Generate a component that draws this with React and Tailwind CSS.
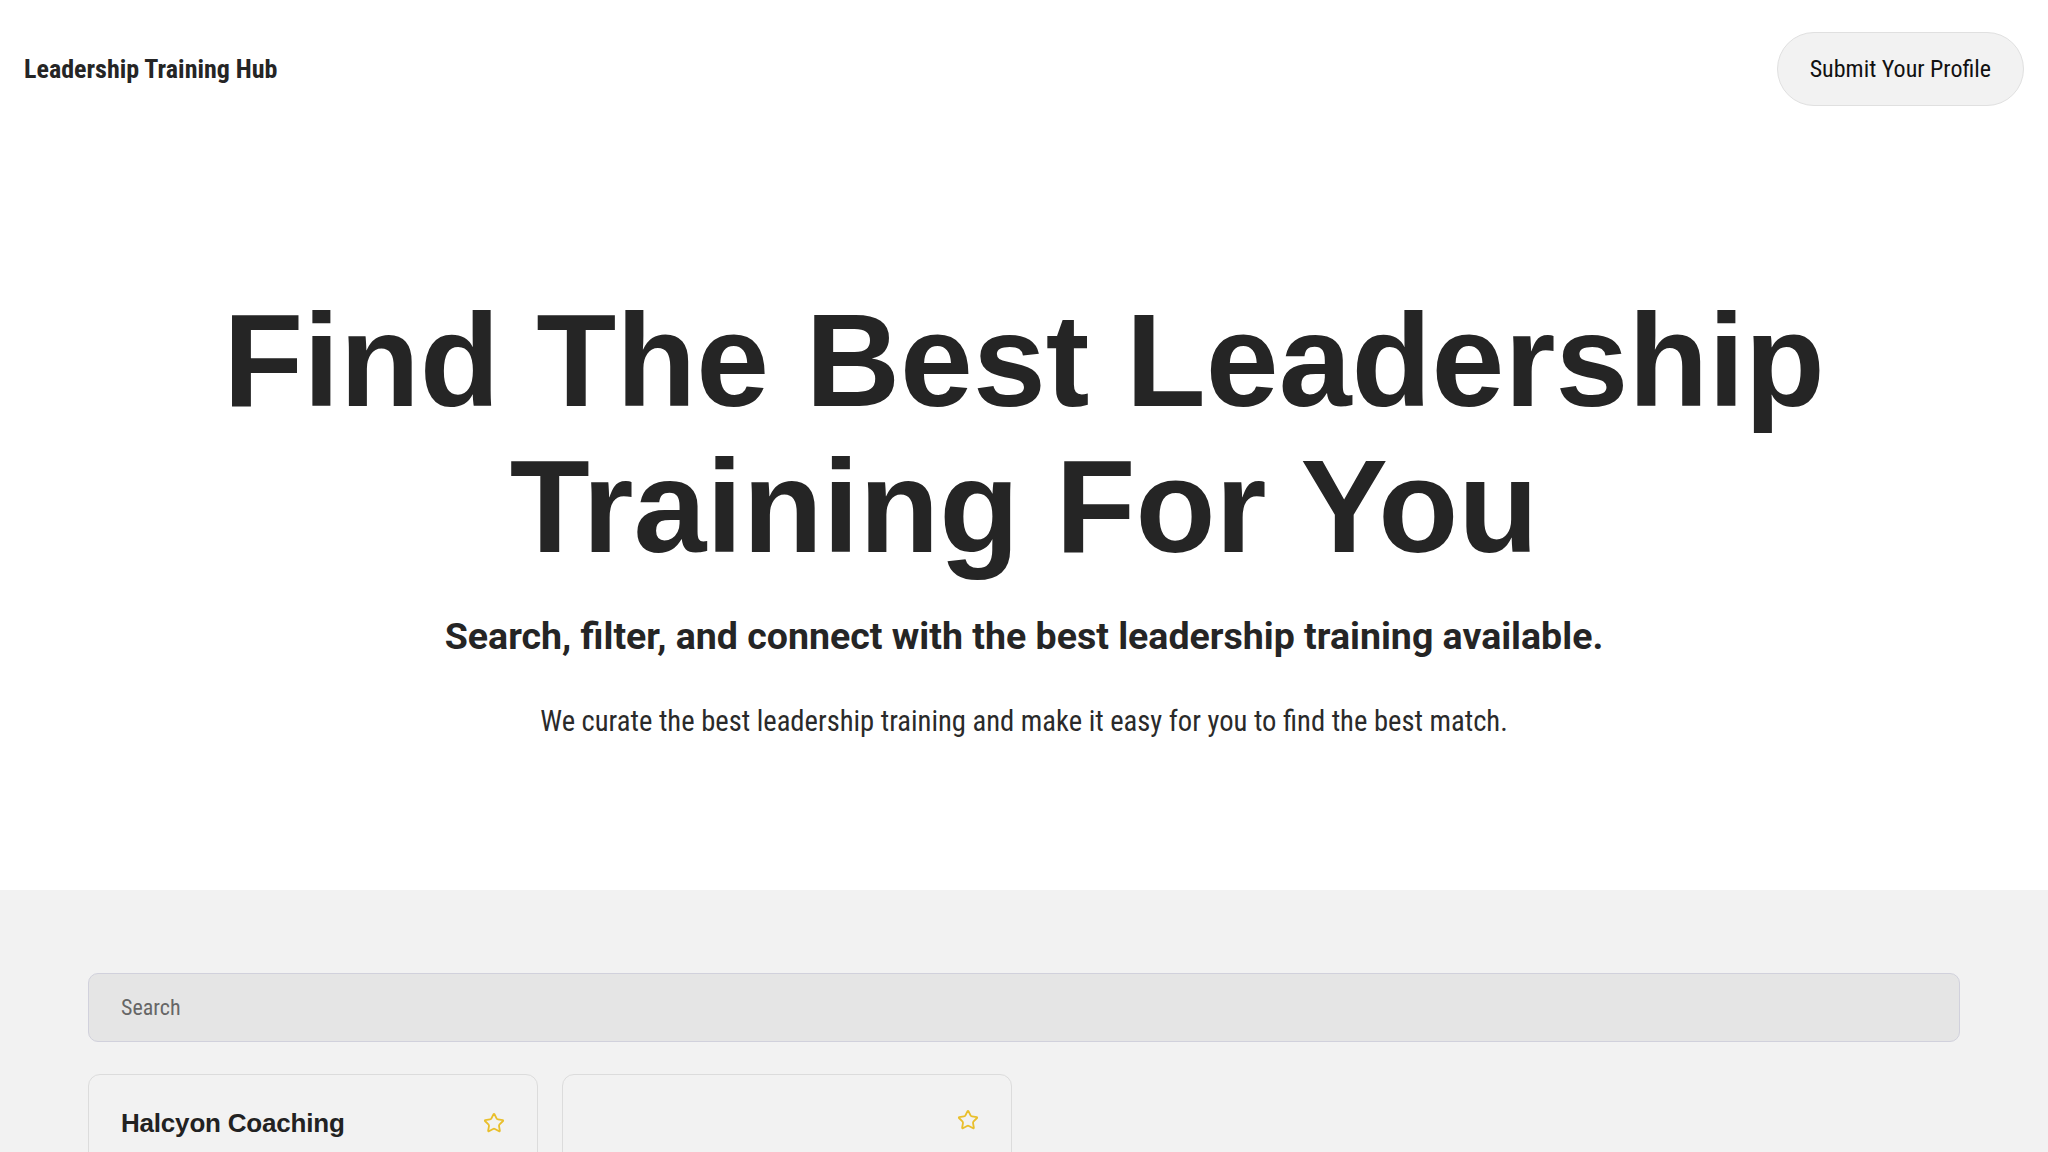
import React from "react";
import { Star } from "lucide-react";

function Card({ title, raised }) {
  return (
    <div className="h-[320px] rounded-xl border border-[#dcdcdc] bg-[#f2f2f2] px-8 pt-[30px]">
      <div className="flex items-center justify-between">
        <h3 className="h-[36px] text-[26px] font-bold leading-[36px] tracking-[-0.2px] text-[#222] [font-family:'Liberation_Sans',Arial,sans-serif]">
          {title}
        </h3>
        <Star
          className={raised ? "-mt-[6px] h-[22px] w-[22px] text-[#e9bf2c]" : "h-[22px] w-[22px] text-[#e9bf2c]"}
          strokeWidth={2}
        />
      </div>
    </div>
  );
}

export default function App() {
  return (
    <div className="min-h-screen bg-white text-[#232323] [font-family:Roboto,sans-serif]">
      <header className="flex items-center justify-between px-6 py-8">
        <div className="text-[26px] font-bold leading-none text-[#252525] [font-stretch:82%]">Leadership Training Hub</div>
        <button className="flex h-[74px] items-center rounded-full border border-[#e0e0e0] bg-[#f2f2f2] px-8 text-[24px] text-[#111] [font-stretch:80%]">
          Submit Your Profile
        </button>
      </header>

      <section className="flex flex-col items-center pt-[150px] pb-[148px] text-center">
        <h1 className="text-[131px] font-bold leading-[146px] text-[#252525] [font-family:'Liberation_Sans',Arial,sans-serif]">
          Find The Best Leadership
          <br />
          Training For You
        </h1>
        <h2 className="mt-8 text-[37.5px] font-bold leading-[48px] text-[#252525] [font-stretch:92%]">
          Search, filter, and connect with the best leadership training available.
        </h2>
        <p className="mt-10 text-[28.6px] leading-[42px] text-[#2a2a2a] [font-stretch:76%]">
          We curate the best leadership training and make it easy for you to find the best match.
        </p>
      </section>

      <section className="bg-[#f2f2f2] px-[88px] pt-[83px] pb-20">
        <input
          type="text"
          placeholder="Search"
          className="h-[69px] w-full rounded-[10px] border border-[#d1d1dc] bg-[#e5e5e5] px-8 text-[22px] text-[#333] outline-none [font-family:Roboto,sans-serif] [font-stretch:80%] placeholder:text-[#666]"
        />
        <div className="mt-8 grid grid-cols-4 gap-6">
          <Card title="Halcyon Coaching" />
          <Card title="" raised />
          <div />
          <div />
        </div>
      </section>
    </div>
  );
}
